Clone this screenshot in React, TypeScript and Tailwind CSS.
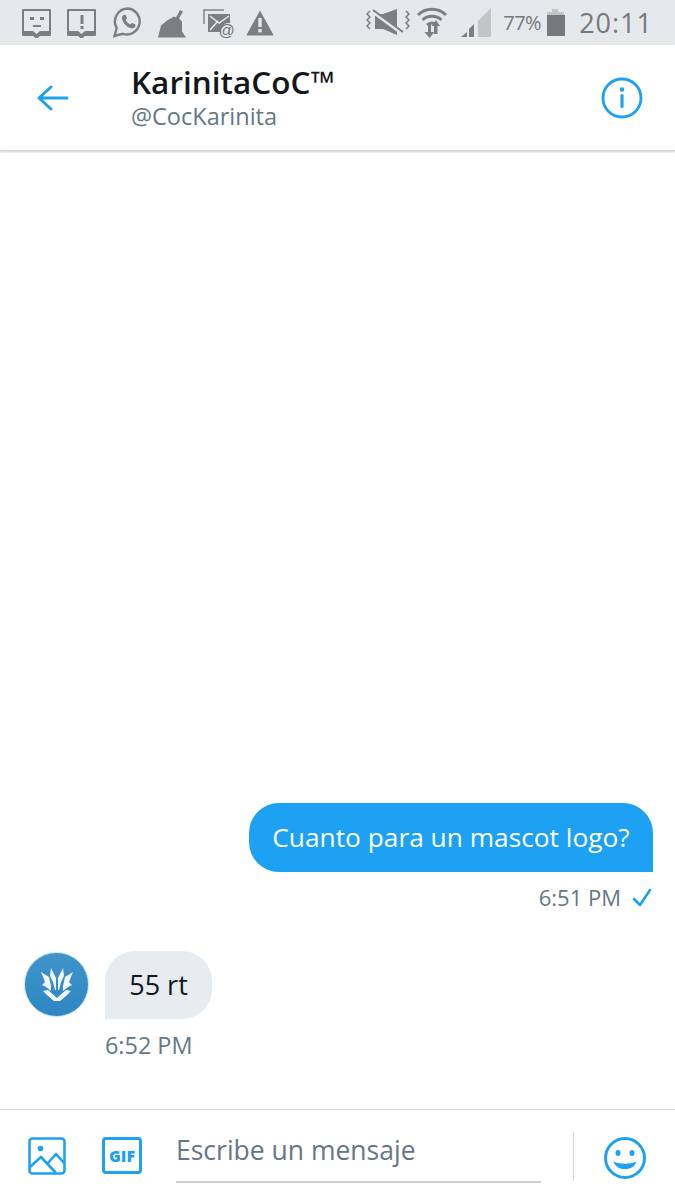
const font = { fontFamily: '"Open Sans", "Noto Sans", sans-serif' };

function Notice({ kind }: { kind: "face" | "bang" }) {
  return (
    <svg width="32" height="30" viewBox="0 0 32 30" className="block">
      <path fillRule="evenodd" fill="#7b7f82" d="M2 1h27a1 1 0 0 1 1 1v25a1 1 0 0 1-1 1H19l-3.500 3-3.500-3H2a1 1 0 0 1-1-1V2a1 1 0 0 1 1-1zM3 3v20h9l3.500 3 3.500-3h9V3z" />
      {kind === "face" ? (
        <>
          <rect x="9" y="9" width="4" height="3" fill="#7b7f82" />
          <rect x="19" y="9" width="4" height="3" fill="#7b7f82" />
          <rect x="12" y="17" width="8" height="2" fill="#7b7f82" />
        </>
      ) : (
        <>
          <rect x="14.500" y="7" width="3" height="9" fill="#7b7f82" />
          <rect x="14.500" y="18" width="3" height="3" fill="#7b7f82" />
        </>
      )}
    </svg>
  );
}

function StatusLeft() {
  return (
    <div className="flex items-center">
      <div className="ml-[21px] mt-[1px]"><Notice kind="face" /></div>
      <div className="ml-[13px] mt-[1px]"><Notice kind="bang" /></div>
      <svg width="32" height="32" viewBox="0 0 32 32" className="ml-[14px] -mt-[1px]">
        <path d="M16 2.500a13 13 0 0 0-11.300 19.500L2.500 30l8.200-2.200A13 13 0 1 0 16 2.500z" fill="none" stroke="#7b7f82" strokeWidth="2.400" />
        <path d="M11.500 9c-1.500 1-2 3-1 5.500 1.500 3.500 4 6 7.500 7.500 2.500.8 4.500 0 5.300-1.500l.2-2-3.500-1.700-1.500 1.700c-2-.8-3.800-2.500-4.800-4.600l1.300-1.600-1.500-3.500z" fill="#7b7f82" />
      </svg>
      <svg width="30" height="30" viewBox="0 0 30 30" className="ml-[13px] mt-[3px]">
        <path d="M23 1l3 1.500-4 7 3 3v10l4 6H1l3-12 6-5 7-4 2 1z" fill="#7b7f82" />
      </svg>
      <svg width="32" height="30" viewBox="0 0 32 30" className="ml-[15px]">
        <path d="M1 1h21v2H3v13H1z" fill="#9a9da0" />
        <path d="M6 6h22v9a8 8 0 0 0-9 9H6z" fill="#7b7f82" />
        <path d="M8 8l9 7 10-7M8 22l8-9" stroke="#e6e9ec" strokeWidth="1.500" fill="none" />
        <text x="16.500" y="28" fontSize="16" fill="#6f7376" fontFamily="Liberation Sans, sans-serif">@</text>
      </svg>
      <svg width="28" height="26" viewBox="0 0 28 26" className="ml-[12px]">
        <path d="M14 0.500L27.500 25a.5.5 0 0 1-.5.500H1a.5.5 0 0 1-.5-.5z" fill="#7b7f82" />
        <rect x="12.300" y="8" width="3.400" height="9" fill="#e6e9ec" />
        <rect x="12.300" y="19" width="3.400" height="3.400" fill="#e6e9ec" />
      </svg>
    </div>
  );
}

function StatusRight() {
  return (
    <div className="flex items-center text-[#75797c]" style={font}>
      <svg width="44" height="30" viewBox="0 0 44 30">
        <path d="M4 3l-3 3 3 3-3 3 3 3-3 3 3 3M40 3l3 3-3 3 3 3-3 3 3 3-3 3" fill="none" stroke="#7b7f82" strokeWidth="1.500" />
        <path d="M9 6h8l14-5v26l-14-6H9z" fill="#7b7f82" />
        <path d="M6 3l30 22" stroke="#e6e9ec" strokeWidth="4" />
        <path d="M7 2l30 22" stroke="#7b7f82" strokeWidth="2" />
      </svg>
      <svg width="32" height="34" viewBox="0 0 32 34" className="ml-[6px]">
        <path d="M2 9a20 20 0 0 1 28 0M6.500 14a14 14 0 0 1 19 0M11 19a7 7 0 0 1 10 0" fill="none" stroke="#7b7f82" strokeWidth="3" />
        <path d="M12 18v8h-3.500l5 6 5-6H15v-8zM20 14l-4.500 6H18v8h3.500v-8H24z" fill="#7b7f82" />
      </svg>
      <svg width="32" height="32" viewBox="0 0 32 32" className="ml-[12px]">
        <path d="M1 30l6-5v5z" fill="#7b7f82" />
        <path d="M9 22l5-5v13H9z" fill="#7b7f82" />
        <path d="M18 14l13-13v29H18z" fill="#c2c4c6" />
      </svg>
      <span className="ml-[11px] text-[20px] leading-none tracking-[-0.5px]">77%</span>
      <svg width="19" height="30" viewBox="0 0 19 30" className="ml-[5px]">
        <path d="M6 1h6v3h6v3H1V4h5z" fill="#c2c4c6" />
        <rect x="1" y="7" width="18" height="21" fill="#75797c" />
      </svg>
      <span className="ml-[14px] text-[27px] leading-none tracking-[1px]">20:11</span>
    </div>
  );
}

function Avatar() {
  return (
    <div className="w-[65px] h-[65px] rounded-full bg-gradient-to-b from-[#3f94c9] to-[#2f86c2] flex items-center justify-center shrink-0 border border-[#bfe0f2]">
      <svg width="50" height="50" viewBox="0 0 50 50">
        <path d="M9 12l8 5 2 9v5l-5-4-4-2 3-3z" fill="#f2f8fc" />
        <path d="M41 12l-8 5-2 9v5l5-4 4-2-3-3z" fill="#f2f8fc" />
        <path d="M19 8l5 10v12h-1l-2-8-3-6z" fill="#f2f8fc" />
        <path d="M31 8l-5 10v12h1l2-8 3-6z" fill="#f2f8fc" />
        <path d="M11 31l5-1 9 8 9-8 5 1-5 5-6 5h-6l-6-5z" fill="#f2f8fc" />
      </svg>
    </div>
  );
}

export default function App() {
  return (
    <div className="w-[675px] h-[1200px] flex flex-col bg-white overflow-hidden" style={font}>
      <div className="h-[45px] bg-[#e6e9ec] flex items-center justify-between pr-[22px] shrink-0">
        <StatusLeft />
        <StatusRight />
      </div>

      <header className="h-[106px] shrink-0 flex items-center bg-white border-b border-[#d5d7d9] shadow-[0_1px_2px_rgba(0,0,0,0.2)] relative">
        <svg width="34" height="30" viewBox="0 0 34 30" className="ml-[36px]">
          <path d="M3 15h28M15 4L3 15l12 11" fill="none" stroke="#1da1f2" strokeWidth="3" strokeLinecap="round" strokeLinejoin="round" />
        </svg>
        <div className="ml-[61px] flex-1">
          <div className="text-[31.500px] leading-[36px] font-semibold text-[#14171a]">KarinitaCoC™</div>
          <div className="text-[23.500px] leading-[32px] text-[#657786]">@CocKarinita</div>
        </div>
        <svg width="42" height="42" viewBox="0 0 42 42" className="mr-[32px]">
          <circle cx="21" cy="21" r="19" fill="none" stroke="#1da1f2" strokeWidth="2.800" />
          <circle cx="21" cy="12.500" r="2.300" fill="#1da1f2" />
          <rect x="19.400" y="17" width="3.200" height="14" rx="1.500" fill="#1da1f2" />
        </svg>
      </header>

      <main className="flex-1 flex flex-col justify-end pb-[49px]">
        <div className="flex justify-end pr-[22px]">
          <div className="h-[69px] w-[404px] rounded-[30px] rounded-br-none bg-[#1da1f2] text-white text-[26.300px] flex items-center justify-center whitespace-nowrap">
            Cuanto para un mascot logo?
          </div>
        </div>
        <div className="flex justify-end items-center pr-[23px] mt-[11px] h-[29px] text-[#657786] text-[22px]">
          <span>6:51 PM</span>
          <svg width="20" height="20" viewBox="0 0 20 20" className="ml-[11px]">
            <path d="M2 11l6 6L18 2" fill="none" stroke="#1da1f2" strokeWidth="2.600" strokeLinecap="round" strokeLinejoin="round" />
          </svg>
        </div>
        <div className="flex items-start pl-[24px] gap-[16px] mt-[39px]">
          <div className="mt-[1px]"><Avatar /></div>
          <div>
            <div className="h-[68px] w-[107px] rounded-[30px] rounded-bl-none bg-[#e6ecf0] text-[#14171a] text-[27px] flex items-center justify-center">55 rt</div>
            <div className="text-[#657786] text-[23.400px] mt-[12px] h-[29px] leading-[29px]">6:52 PM</div>
          </div>
        </div>
      </main>

      <footer className="h-[91px] shrink-0 border-t border-[#d3d6d9] flex items-start relative">
        <svg width="38" height="38" viewBox="0 0 38 38" className="ml-[28px] mt-[27px]">
          <rect x="1.500" y="1.500" width="35" height="35" rx="3" fill="none" stroke="#1da1f2" strokeWidth="2.600" />
          <circle cx="12.500" cy="11.500" r="2.800" fill="#1da1f2" />
          <path d="M2 30l11-10 15 16M20 26l8-9 9 10" fill="none" stroke="#1da1f2" strokeWidth="2.600" strokeLinejoin="round" />
        </svg>
        <div className="ml-[36px] mt-[27px] w-[40px] h-[37px] border-[3px] border-[#1da1f2] rounded-[4px] flex items-center justify-center text-[#1da1f2] text-[16px] font-extrabold leading-none">GIF</div>
        <div className="ml-[34px] mt-[19px] w-[365px] h-[54px] border-b-2 border-[#c9ced2] text-[#657786] text-[26.500px] leading-[42px]">Escribe un mensaje</div>
        <div className="ml-[32px] mt-[22px] w-px h-[49px] bg-[#d3d6d9]"></div>
        <svg width="44" height="44" viewBox="0 0 44 44" className="ml-[29px] mt-[26px]">
          <circle cx="22" cy="22" r="19.500" fill="none" stroke="#1da1f2" strokeWidth="3" />
          <ellipse cx="15" cy="17" rx="2.500" ry="3" fill="#1da1f2" />
          <ellipse cx="29" cy="17" rx="2.500" ry="3" fill="#1da1f2" />
          <path d="M10.500 25.500c7 3 16 3 23 0-2 6-7 7.500-11.500 7.500s-9.500-1.500-11.500-7.500z" fill="#1da1f2" />
        </svg>
      </footer>
    </div>
  );
}
